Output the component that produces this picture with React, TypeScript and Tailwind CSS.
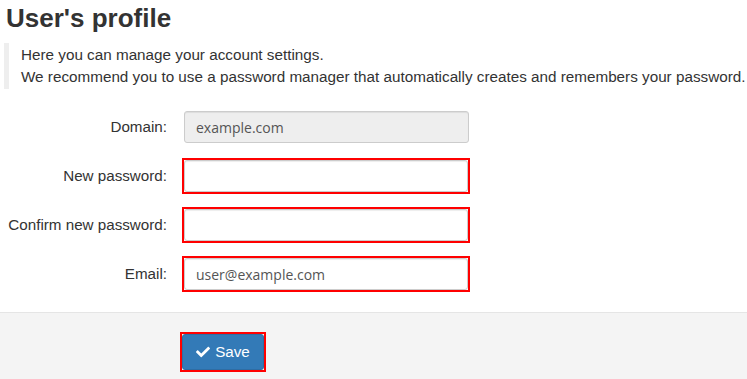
import { FaCheck } from "react-icons/fa";

const labelCls = "w-[167px] shrink-0 whitespace-nowrap text-right text-[15.2px] text-[#333]";
const inputCls =
  "h-[32px] rounded-[3px] border border-[#ccc] px-[11px] text-[14px] text-[#555] shadow-[inset_0_1px_1px_rgba(0,0,0,0.075)] outline-none";

function Field({
  label,
  value,
  type = "text",
  invalid,
  disabled,
}: {
  label: string;
  value?: string;
  type?: string;
  invalid?: boolean;
  disabled?: boolean;
}) {
  return (
    <div className="flex h-[36px] items-center gap-[15px]">
      <label className={labelCls}>{label}</label>
      {invalid ? (
        <div className="border-2 border-[#ff0000]">
          <input
            type={type}
            defaultValue={value}
            className={`${inputCls} w-[284px] bg-white`}
            style={{ fontFamily: '"Open Sans", sans-serif' }}
          />
        </div>
      ) : (
        <input
          type={type}
          defaultValue={value}
          disabled={disabled}
          className={`${inputCls} ml-[2px] w-[285px] bg-[#eee]`}
          style={{ fontFamily: '"Open Sans", sans-serif' }}
        />
      )}
    </div>
  );
}

export default function App() {
  return (
    <div className="min-h-[379px] bg-white font-['Liberation_Sans',Arial,sans-serif] text-[#333]">
      <h1 className="pl-[6px] pt-[2px] text-[26px] font-bold leading-[32px] text-[#333]">
        User's profile
      </h1>
      <blockquote className="ml-[4px] mt-[9px] border-l-[5px] border-[#eee] py-[1px] pl-[12px] text-[15.25px] leading-[22px]">
        <p>Here you can manage your account settings.</p>
        <p className="whitespace-nowrap">
          We recommend you to use a password manager that automatically creates and remembers your password.
        </p>
      </blockquote>

      <form className="mt-[20px] flex flex-col gap-[13px]">
        <Field label="Domain:" value="example.com" disabled />
        <Field label="New password:" type="password" invalid />
        <Field label="Confirm new password:" type="password" invalid />
        <Field label="Email:" value="user@example.com" invalid />
      </form>

      <div className="mt-[20px] flex h-[67px] border-t border-[#e5e5e5] bg-[#f4f4f4] pl-[180px] pt-[19px]">
        <div className="h-fit border-2 border-[#ff0000]">
          <button
            type="button"
            className="flex h-[36px] w-[82px] items-center justify-center gap-[5px] rounded-[3px] border border-[#2e6da4] bg-[#337ab7] text-[15.2px] text-white"
          >
            <FaCheck className="h-[14px] w-[14px]" />
            Save
          </button>
        </div>
      </div>
    </div>
  );
}
